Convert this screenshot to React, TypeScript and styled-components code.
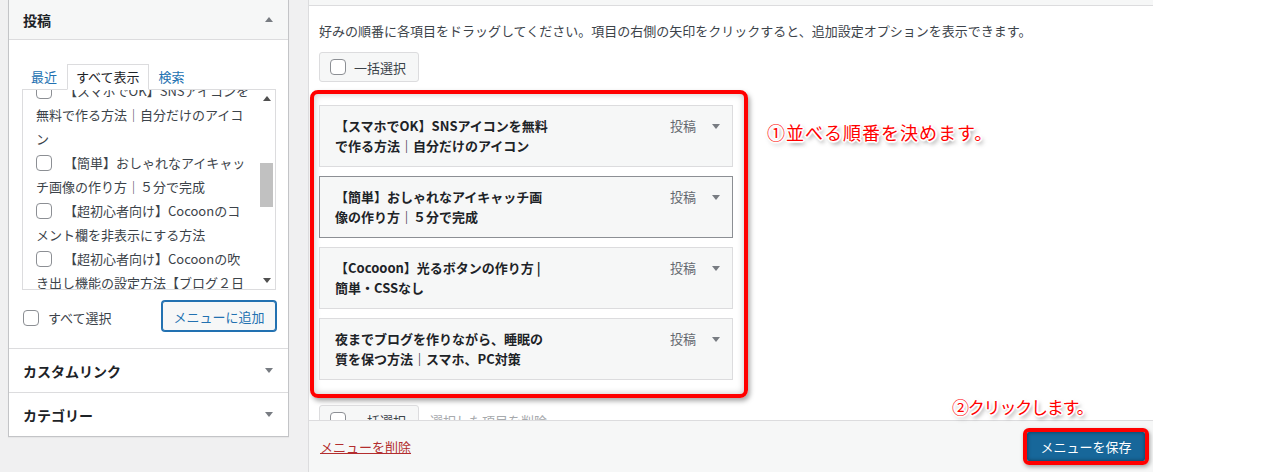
import React from 'react';
import styled, { createGlobalStyle } from 'styled-components';

const GlobalStyle = createGlobalStyle`
  html, body {
    margin: 0;
    padding: 0;
  }
  body {
    font-family: "Noto Sans CJK JP", "Noto Sans", sans-serif;
    font-size: 13px;
    color: #3c434a;
    background: #fff;
  }
  * {
    box-sizing: border-box;
  }
`;

const Page = styled.div`
  position: relative;
  display: flex;
  width: 1270px;
  height: 472px;
  overflow: hidden;
  background: #fff;
`;

/* ---------- left column ---------- */

const SideColumn = styled.div`
  width: 308px;
  flex-shrink: 0;
  background: #f0f0f1;
  padding-left: 8px;
`;

const Accordion = styled.div`
  width: 281px;
  background: #fff;
  border: 1px solid #c3c4c7;
  border-top: none;
  box-shadow: 0 1px 1px rgba(0, 0, 0, 0.04);
`;

const SectionTitle = styled.div<{ $open?: boolean; $h: number; $last?: boolean }>`
  display: flex;
  align-items: center;
  justify-content: space-between;
  height: ${(p) => p.$h}px;
  padding: 0 15px 0 14px;
  font-size: 14px;
  font-weight: 700;
  color: #1d2327;
  background: ${(p) => (p.$open ? '#f6f7f7' : '#fff')};
  border-bottom: ${(p) => (p.$last ? 'none' : '1px solid #dcdcde')};
`;

const Triangle = styled.span<{ $up?: boolean; $size?: number; $color?: string }>`
  display: inline-block;
  width: 0;
  height: 0;
  border-left: ${(p) => p.$size ?? 4}px solid transparent;
  border-right: ${(p) => p.$size ?? 4}px solid transparent;
  ${(p) =>
    p.$up
      ? `border-bottom: ${(p.$size ?? 4) + 1}px solid ${p.$color ?? '#787c82'};`
      : `border-top: ${(p.$size ?? 4) + 1}px solid ${p.$color ?? '#787c82'};`}
`;

const SectionBody = styled.div`
  height: 309px;
  padding: 24px 12px 0 13px;
  border-bottom: 1px solid #dcdcde;
`;

const Tabs = styled.div`
  position: relative;
  z-index: 1;
  display: flex;
  gap: 1px;
`;

const Tab = styled.span<{ $active?: boolean }>`
  padding: 0 8px;
  line-height: 24px;
  border: 1px solid ${(p) => (p.$active ? '#dcdcde' : 'transparent')};
  border-bottom: 1px solid ${(p) => (p.$active ? '#fff' : 'transparent')};
  background: ${(p) => (p.$active ? '#fff' : 'transparent')};
  color: ${(p) => (p.$active ? '#1d2327' : '#2271b1')};
`;

const ListBox = styled.div`
  display: flex;
  height: 201px;
  margin-top: -1px;
  border: 1px solid #dcdcde;
  background: #fff;
  overflow: hidden;
`;

const ListScroll = styled.div`
  flex: 1;
  padding-left: 13px;
  margin-top: -11px;
  line-height: 24px;
  color: #3c434a;
  white-space: nowrap;
`;

const Checkbox = styled.span<{ $gap?: number }>`
  display: inline-block;
  width: 16px;
  height: 16px;
  margin-right: ${(p) => p.$gap ?? 0}px;
  border: 1px solid #8c8f94;
  border-radius: 4px;
  background: #fff;
  vertical-align: -3px;
  flex-shrink: 0;
`;

const ScrollBar = styled.div`
  display: flex;
  flex-direction: column;
  width: 16px;
  background: #fff;
`;

const ScrollButton = styled.div`
  display: flex;
  align-items: center;
  justify-content: center;
  height: 17px;
`;

const ScrollTrack = styled.div`
  flex: 1;
  padding: 56px 2px 0 1px;
`;

const ScrollThumb = styled.div`
  height: 44px;
  background: #c1c1c1;
`;

const SelectRow = styled.div`
  display: flex;
  align-items: center;
  justify-content: space-between;
  margin-top: 11px;
`;

const SelectAll = styled.label`
  display: flex;
  align-items: center;
  gap: 9px;
  padding-left: 1px;
  margin-top: 3px;
  color: #3c434a;
`;

const AddButton = styled.button`
  width: 114px;
  height: 30px;
  padding: 0 8px;
  border: 1px solid #2271b1;
  border-radius: 3px;
  box-shadow: 0 0 0 1px #2271b1;
  background: #f6f7f7;
  color: #2271b1;
  font-family: inherit;
  font-size: 13px;
`;

/* ---------- menu editor ---------- */

const Editor = styled.div`
  display: flex;
  flex-direction: column;
  width: 845px;
  flex-shrink: 0;
  border-left: 1px solid #dcdcde;
  background: #fff;
`;

const EditorTop = styled.div`
  height: 6px;
  background: #f6f7f7;
  border-bottom: 1px solid #dcdcde;
`;

const EditorBody = styled.div`
  flex: 1;
  overflow: hidden;
  padding: 15px 10px 0;
`;

const Hint = styled.p`
  margin: 0;
  line-height: 20px;
  color: #3c434a;
`;

const BulkButton = styled.div<{ $mt: number }>`
  display: inline-flex;
  align-items: center;
  gap: 8px;
  height: 30px;
  margin-top: ${(p) => p.$mt}px;
  padding: 0 12px 0 10px;
  border: 1px solid #dcdcde;
  border-radius: 3px;
  background: #f6f7f7;
  color: #3c434a;
`;

const RedFrame = styled.div`
  width: 438px;
  margin: 8px 0 0 -9px;
  padding: 11px 11px 14px 5px;
  border: 4px solid #ff0000;
  border-radius: 8px;
  box-shadow: 2px 3px 5px rgba(0, 0, 0, 0.35), inset 0 0 7px rgba(0, 0, 0, 0.22);
  display: flex;
  flex-direction: column;
  gap: 9px;
`;

const MenuItem = styled.div<{ $hover?: boolean }>`
  display: flex;
  align-items: flex-start;
  justify-content: space-between;
  height: 62px;
  padding: 10px 12px 10px 15px;
  border: 1px solid ${(p) => (p.$hover ? '#8c8f94' : '#dcdcde')};
  background: #f6f7f7;
`;

const ItemTitle = styled.div`
  font-weight: 700;
  line-height: 20px;
  color: #1d2327;
`;

const ItemControls = styled.div`
  display: flex;
  align-items: center;
  gap: 16px;
  padding-left: 2px;
  line-height: 20px;
  color: #646970;
`;

const BulkRow = styled.div`
  display: flex;
  align-items: center;
  gap: 11px;
  margin-top: 7px;
`;

const Disabled = styled.span`
  color: #a7aaad;
`;

const Footer = styled.div`
  display: flex;
  align-items: center;
  justify-content: space-between;
  height: 52px;
  padding: 0 4px 0 11px;
  border-top: 1px solid #dcdcde;
  background: #f6f7f7;
`;

const DeleteLink = styled.a`
  color: #b32d2e;
  text-decoration: underline;
`;

const SaveRing = styled.div`
  display: flex;
  border: 4px solid #ff0000;
  border-radius: 6px;
  box-shadow: 1px 2px 4px rgba(0, 0, 0, 0.35);
`;

const SaveButton = styled.button`
  width: 118px;
  height: 29px;
  border: none;
  border-radius: 2px;
  background: #17679a;
  box-shadow: inset 0 0 4px rgba(0, 0, 0, 0.45);
  color: #fff;
  font-family: inherit;
  font-size: 13px;
`;

const Filler = styled.div`
  flex: 1;
  background: #fff;
`;

/* ---------- annotations ---------- */

const Note = styled.div<{ $x: number; $y: number; $size: number; $spacing?: number }>`
  position: absolute;
  left: ${(p) => p.$x}px;
  top: ${(p) => p.$y}px;
  font-size: ${(p) => p.$size}px;
  line-height: 24px;
  letter-spacing: ${(p) => p.$spacing ?? 0}px;
  color: #ff0000;
  white-space: nowrap;
  text-shadow: 1px 0 0 #fff, -1px 0 0 #fff, 0 1px 0 #fff, 0 -1px 0 #fff,
    1px 1px 0 #fff, -1px -1px 0 #fff, 1px -1px 0 #fff, -1px 1px 0 #fff,
    2px 0 1px #fff, -2px 0 1px #fff, 0 2px 1px #fff, 0 -2px 1px #fff,
    2px 3px 4px rgba(0, 0, 0, 0.6);
`;

const postLines: string[][] = [
  ['【スマホでOK】SNSアイコンを', '無料で作る方法｜自分だけのアイコ', 'ン'],
  ['【簡単】おしゃれなアイキャッ', 'チ画像の作り方｜５分で完成'],
  ['【超初心者向け】Cocoonのコ', 'メント欄を非表示にする方法'],
  ['【超初心者向け】Cocoonの吹', 'き出し機能の設定方法【ブログ２日'],
];

const menuItems: { lines: [string, string]; hover?: boolean }[] = [
  { lines: ['【スマホでOK】SNSアイコンを無料', 'で作る方法｜自分だけのアイコン'] },
  { lines: ['【簡単】おしゃれなアイキャッチ画', '像の作り方｜５分で完成'], hover: true },
  { lines: ['【Cocooon】光るボタンの作り方 |', '簡単・CSSなし'] },
  { lines: ['夜までブログを作りながら、睡眠の', '質を保つ方法｜スマホ、PC対策'] },
];

function App() {
  return (
    <>
      <GlobalStyle />
      <Page>
        <SideColumn>
          <Accordion>
            <SectionTitle $open $h={40}>
              投稿
              <Triangle $up />
            </SectionTitle>
            <SectionBody>
              <Tabs>
                <Tab>最近</Tab>
                <Tab $active>すべて表示</Tab>
                <Tab>検索</Tab>
              </Tabs>
              <ListBox>
                <ListScroll>
                  {postLines.map((lines, i) => (
                    <div key={i}>
                      <Checkbox $gap={12} />
                      {lines.map((l, j) => (
                        <React.Fragment key={j}>
                          {j > 0 && <br />}
                          {l}
                        </React.Fragment>
                      ))}
                    </div>
                  ))}
                </ListScroll>
                <ScrollBar>
                  <ScrollButton>
                    <Triangle $up $size={4} $color="#505050" />
                  </ScrollButton>
                  <ScrollTrack>
                    <ScrollThumb />
                  </ScrollTrack>
                  <ScrollButton>
                    <Triangle $size={4} $color="#505050" />
                  </ScrollButton>
                </ScrollBar>
              </ListBox>
              <SelectRow>
                <SelectAll>
                  <Checkbox />
                  すべて選択
                </SelectAll>
                <AddButton>メニューに追加</AddButton>
              </SelectRow>
            </SectionBody>
            <SectionTitle $h={44}>
              カスタムリンク
              <Triangle />
            </SectionTitle>
            <SectionTitle $h={43} $last>
              カテゴリー
              <Triangle />
            </SectionTitle>
          </Accordion>
        </SideColumn>

        <Editor>
          <EditorTop />
          <EditorBody>
            <Hint>
              好みの順番に各項目をドラッグしてください。項目の右側の矢印をクリックすると、追加設定オプションを表示できます。
            </Hint>
            <BulkButton $mt={11}>
              <Checkbox />
              一括選択
            </BulkButton>
            <RedFrame>
              {menuItems.map((item, i) => (
                <MenuItem key={i} $hover={item.hover}>
                  <ItemTitle>
                    {item.lines[0]}
                    <br />
                    {item.lines[1]}
                  </ItemTitle>
                  <ItemControls>
                    投稿
                    <Triangle />
                  </ItemControls>
                </MenuItem>
              ))}
            </RedFrame>
            <BulkRow>
              <BulkButton $mt={0}>
                <Checkbox />
                一括選択
              </BulkButton>
              <Disabled>選択した項目を削除</Disabled>
            </BulkRow>
          </EditorBody>
          <Footer>
            <DeleteLink href="#">メニューを削除</DeleteLink>
            <SaveRing>
              <SaveButton>メニューを保存</SaveButton>
            </SaveRing>
          </Footer>
        </Editor>

        <Filler />

        <Note $x={767} $y={120} $size={18} $spacing={1}>
          ①並べる順番を決めます。
        </Note>
        <Note $x={952} $y={395} $size={17} $spacing={-1.2}>
          ②クリックします。
        </Note>
      </Page>
    </>
  );
}

export default App;
